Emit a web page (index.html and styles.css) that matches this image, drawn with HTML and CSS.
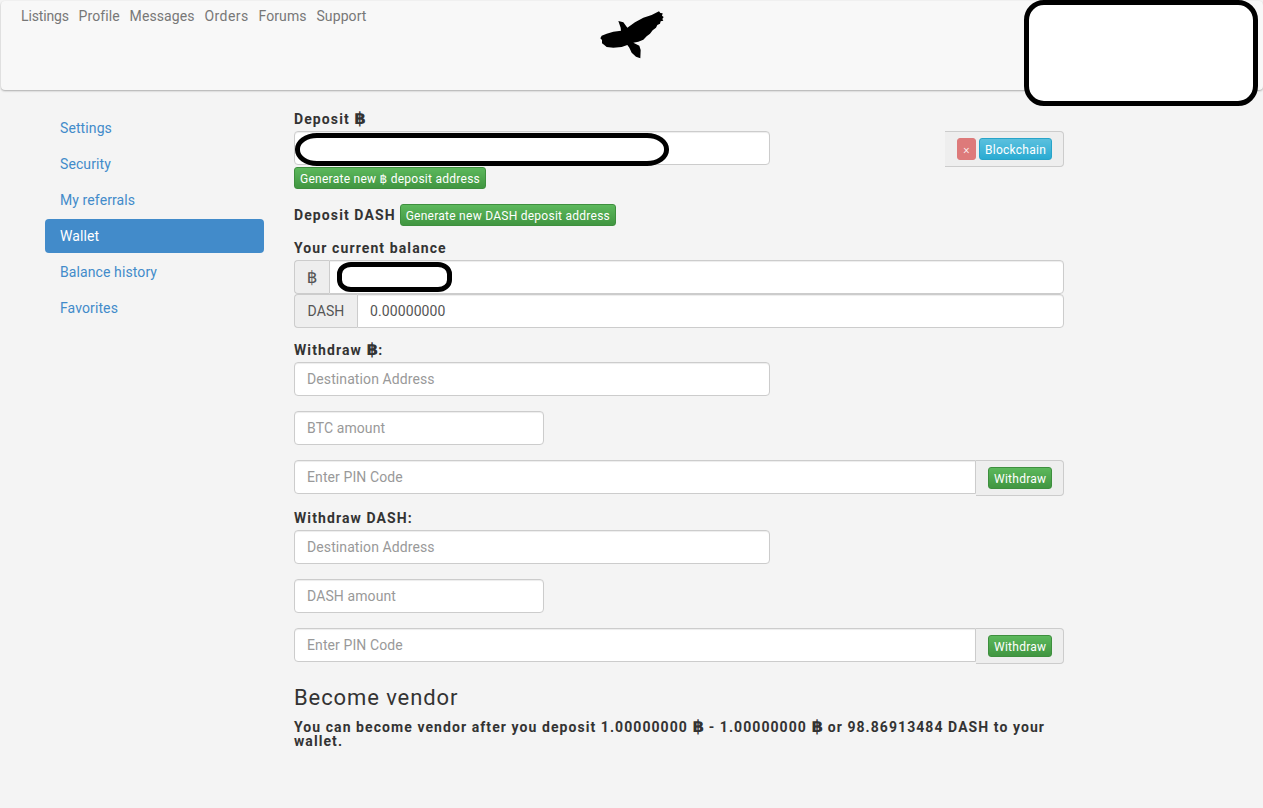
FILE: index.html
```html
<!DOCTYPE html>
<html lang="en">
<head>
<meta charset="utf-8">
<title>Wallet</title>
<link rel="stylesheet" href="styles.css">
</head>
<body>
<header class="navbar">
  <nav class="nav-links">
    <a href="#">Listings</a><a href="#">Profile</a><a href="#">Messages</a><a href="#">Orders</a><a href="#">Forums</a><a href="#">Support</a>
  </nav>
  <svg class="logo" viewBox="0 0 255 180" aria-hidden="true"><path d="M85 48L100 52L112 68L135 52L160 38L185 30L207 19L211 24L218 25L216 32L221 36L217 42L220 47L212 49L210 56L202 60L198 68L188 76L180 86L170 94L160 104L145 110L130 113L148 122L152 135L151 160L138 155L125 143L118 128L112 120L95 126L70 128L50 126L42 119L36 115L36 105L31 100L35 92L50 86L70 80L93 77L92 68Z"/></svg>
  <div class="mask-account"></div>
</header>
<div class="page">
  <aside class="sidebar">
    <a href="#">Settings</a>
    <a href="#">Security</a>
    <a href="#">My referrals</a>
    <a href="#" class="active">Wallet</a>
    <a href="#">Balance history</a>
    <a href="#">Favorites</a>
  </aside>
  <main class="content">
    <label class="lbl lbl-first">Deposit <span class="btc">฿</span></label>
    <div class="deposit-row">
      <div class="input wide masked"><span class="mask-address"></span></div>
      <div class="addon addon-actions">
        <button class="btn btn-danger" type="button">×</button>
        <button class="btn btn-info" type="button">Blockchain</button>
      </div>
    </div>
    <button class="btn btn-success" type="button">Generate new ฿ deposit address</button>
    <div class="dash-row">
      <label class="lbl-inline">Deposit DASH</label>
      <button class="btn btn-success" type="button">Generate new DASH deposit address</button>
    </div>
    <label class="lbl lbl-balance">Your current balance</label>
    <div class="group">
      <span class="addon-left addon-btc"><span class="btc">฿</span></span>
      <div class="input fill joined masked"><span class="mask-balance"></span></div>
    </div>
    <div class="group">
      <span class="addon-left addon-dash">DASH</span>
      <div class="input fill joined value">0.00000000</div>
    </div>
    <label class="lbl lbl-withdraw">Withdraw <span class="btc">฿</span>:</label>
    <input class="input wide" placeholder="Destination Address">
    <input class="input narrow" placeholder="BTC amount">
    <div class="group pin">
      <input class="input fill pin-input" placeholder="Enter PIN Code">
      <div class="addon addon-withdraw"><button class="btn btn-success" type="button">Withdraw</button></div>
    </div>
    <label class="lbl lbl-withdraw2">Withdraw DASH:</label>
    <input class="input wide" placeholder="Destination Address">
    <input class="input narrow" placeholder="DASH amount">
    <div class="group pin">
      <input class="input fill pin-input" placeholder="Enter PIN Code">
      <div class="addon addon-withdraw"><button class="btn btn-success" type="button">Withdraw</button></div>
    </div>
    <h3>Become vendor</h3>
    <p class="note">You can become vendor after you deposit 1.00000000 <span class="btc">฿</span> - 1.00000000 <span class="btc">฿</span> or 98.86913484 DASH to your <span>wallet.</span></p>
  </main>
</div>
</body>
</html>
```
FILE: styles.css
```css
* { box-sizing: border-box; }
html, body { margin: 0; padding: 0; }
body {
  background: #f4f4f4;
  color: #333;
  font-family: Roboto, "Liberation Sans", "DejaVu Sans", sans-serif;
  font-size: 14px;
  line-height: 20px;
  letter-spacing: .1px;
  height: 808px;
  overflow: hidden;
}
a { text-decoration: none; }
.btc { font-size: 1.2em; line-height: 0; letter-spacing: 0; }

.navbar {
  position: relative;
  height: 89px;
  margin: 1px 0 0 1px;
  background: #f8f8f8;
  border-radius: 4px;
  box-shadow: 0 1px 2px rgba(0, 0, 0, .3);
}
.nav-links { display: flex; gap: 9.8px; padding: 5px 0 0 20px; }
.nav-links a { color: #777; }
.nav-links a:first-child { letter-spacing: -.15px; }
.nav-links a:nth-child(4) { letter-spacing: .45px; }
.logo { position: absolute; left: 589px; top: 4px; width: 85px; height: 60px; }
.mask-account {
  position: absolute;
  left: 1023px;
  top: -1px;
  width: 234px;
  height: 106px;
  background: #fff;
  border: 5px solid #000;
  border-radius: 20px;
}

.page { display: flex; padding: 21px 0 0 45px; }
.sidebar { width: 219px; display: flex; flex-direction: column; gap: 2px; flex: none; }
.sidebar a {
  display: block;
  height: 34px;
  padding: 7px 15px;
  color: #428bca;
  border-radius: 4px;
}
.sidebar a.active { background: #428bca; color: #fff; }

.content { width: 770px; margin-left: 30px; display: flex; flex-direction: column; align-items: flex-start; }
.lbl, .lbl-inline { font-weight: 700; display: block; letter-spacing: 1.1px; }
.lbl-first { margin: -2px 0 2px; }
.lbl-balance { margin: 12px 0 2px; }
.lbl-withdraw { margin: 12px 0 2px; }
.lbl-withdraw2 { margin: 12px 0 2px; }

.input {
  display: block;
  height: 34px;
  padding: 6px 12px;
  font: inherit;
  letter-spacing: inherit;
  color: #555;
  background: #fff;
  border: 1px solid #ccc;
  border-radius: 4px;
  box-shadow: inset 0 1px 1px rgba(0, 0, 0, .075);
  outline: 0;
}
.input::placeholder { color: #999; opacity: 1; }
.wide { width: 476px; margin-bottom: 15px; }
.narrow { width: 250px; margin-bottom: 15px; }
.fill { flex: 1; min-width: 0; }
.masked { position: relative; }
.deposit-row { display: flex; justify-content: space-between; width: 100%; height: 36px; }
.deposit-row .wide { margin: 0; }
.addon {
  display: flex;
  align-items: center;
  background: #eee;
  border: 1px solid #ccc;
  border-left: 0;
  border-radius: 0 4px 4px 0;
  height: 36px;
}
.addon-actions { width: 119px; padding-left: 12px; gap: 3px; }
.addon-withdraw { width: 88px; padding-left: 12px; }

.btn {
  font: inherit;
  font-size: 12px;
  line-height: 18px;
  letter-spacing: .26px;
  height: 22px;
  padding: 2px 5px 0;
  border: 1px solid transparent;
  border-radius: 3px;
  color: #fff;
  white-space: nowrap;
}
.btn-success {
  background: linear-gradient(#5cb85c, #419641);
  border-color: #3e8f3e;
}
.btn-info {
  background: linear-gradient(#5bc0de, #2aabd2);
  border-color: #28a4c9;
}
.btn-danger {
  width: 19px;
  padding: 2px 0 0;
  background: #dd7a7a;
  border-color: #dd7a7a;
  font-weight: 300;
  letter-spacing: 0;
}
.dash-row { display: flex; align-items: center; gap: 4px; margin-top: 15px; }

.group { display: flex; width: 100%; height: 34px; }
.addon-left {
  display: flex;
  align-items: center;
  justify-content: center;
  background: #eee;
  border: 1px solid #ccc;
  border-right: 0;
  border-radius: 4px 0 0 4px;
  color: #555;
}
.addon-btc { width: 35px; }
.addon-dash { width: 63px; }
.joined { border-radius: 0 4px 4px 0; }
.pin { height: 36px; }
.pin-input { border-radius: 4px 0 0 4px; }

.mask-address {
  position: absolute;
  left: 0;
  top: 1px;
  width: 374px;
  height: 33px;
  background: #fff;
  border: 5px solid #000;
  border-radius: 22px / 16px;
}
.mask-balance {
  position: absolute;
  left: 7px;
  top: 1px;
  width: 115px;
  height: 30px;
  background: #fff;
  border: 5px solid #000;
  border-radius: 14px / 12px;
}

h3 { font-size: 22px; font-weight: 400; line-height: 24px; letter-spacing: .9px; margin: 22px 0 10px; }
.note { margin: 0; font-weight: 700; line-height: 14px; letter-spacing: 1.07px; }
```
